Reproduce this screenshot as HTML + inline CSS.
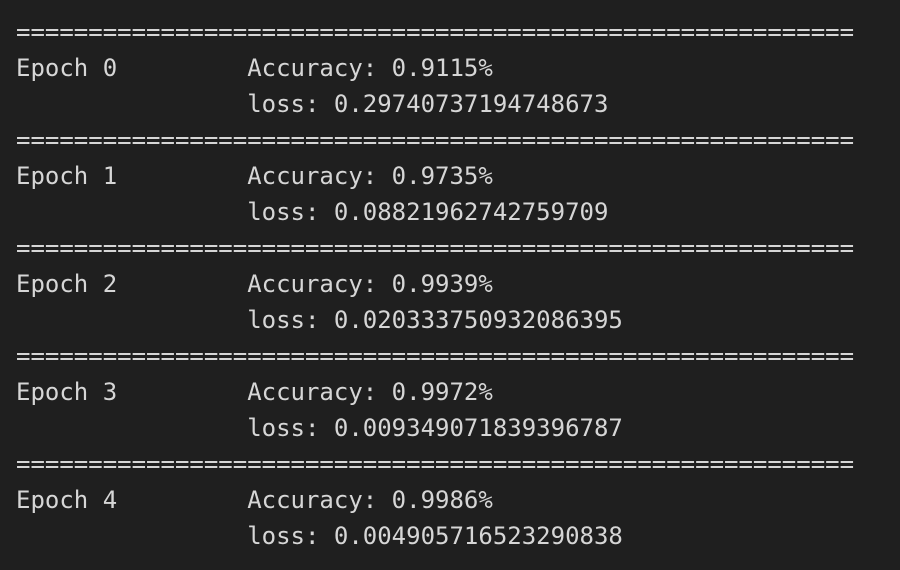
<!DOCTYPE html>
<html><head><meta charset="utf-8"><style>
html,body{margin:0;background:#1f1f1f;width:900px;height:570px;overflow:hidden}
pre{margin:0;position:absolute;left:16px;top:14px;font-family:"DejaVu Sans Mono","Liberation Mono",monospace;font-size:24px;line-height:36px;color:#d6d6d6}
</style></head><body><pre>==========================================================
Epoch 0         Accuracy: 0.9115%
                loss: 0.29740737194748673
==========================================================
Epoch 1         Accuracy: 0.9735%
                loss: 0.08821962742759709
==========================================================
Epoch 2         Accuracy: 0.9939%
                loss: 0.020333750932086395
==========================================================
Epoch 3         Accuracy: 0.9972%
                loss: 0.009349071839396787
==========================================================
Epoch 4         Accuracy: 0.9986%
                loss: 0.004905716523290838</pre></body></html>
